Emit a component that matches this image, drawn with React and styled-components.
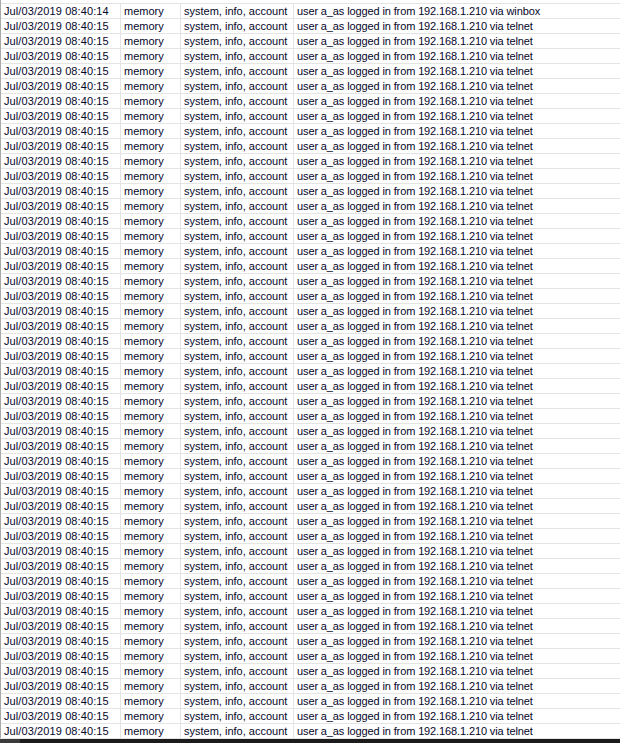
import styled, { createGlobalStyle } from "styled-components";

const GlobalStyle = createGlobalStyle`
  html, body {
    margin: 0;
    padding: 0;
    background: #ffffff;
  }
  body {
    width: 620px;
    height: 743px;
    overflow: hidden;
  }
`;

const Screen = styled.div`
  display: flex;
  flex-direction: column;
  width: 620px;
  height: 743px;
  overflow: hidden;
  background: #ffffff;
`;

const Table = styled.div`
  flex: 1;
  padding-top: 3px;
  border-left: 1px solid #a8a8a8;
  overflow: hidden;
`;

const Row = styled.div`
  display: grid;
  grid-template-columns: 120px 60px 113px 1fr;
  height: 14px;
  border-top: 1px solid #e4e4e4;
  font-family: "Liberation Sans", Arial, sans-serif;
  font-size: 11px;
  line-height: 14px;
  color: #06062a;
  white-space: nowrap;
`;

const Cell = styled.div`
  padding-left: 3px;
  letter-spacing: ${(p) => p.$spacing || "0"};
  border-right: ${(p) => (p.$last ? "none" : "1px solid #e4e4e4")};
  overflow: hidden;
`;

const StatusBar = styled.div`
  display: flex;
  height: 4px;
  border-top: 1px solid #e4e4e4;
  background: #1b1b1b;
`;

const StatusGrip = styled.div`
  width: 20px;
  background: #3a3a3a;
`;

const logs = Array.from({ length: 49 }, (_, i) => ({
  time: i === 0 ? "Jul/03/2019 08:40:14" : "Jul/03/2019 08:40:15",
  buffer: "memory",
  topics: "system, info, account",
  message:
    "user a_as logged in from 192.168.1.210 via " + (i === 0 ? "winbox" : "telnet"),
}));

export default function App() {
  return (
    <Screen>
      <GlobalStyle />
      <Table>
        {logs.map((log, i) => (
          <Row key={i}>
            <Cell $spacing="0.1px">{log.time}</Cell>
            <Cell>{log.buffer}</Cell>
            <Cell>{log.topics}</Cell>
            <Cell $last $spacing="-0.12px">{log.message}</Cell>
          </Row>
        ))}
      </Table>
      <StatusBar>
        <StatusGrip />
      </StatusBar>
    </Screen>
  );
}
